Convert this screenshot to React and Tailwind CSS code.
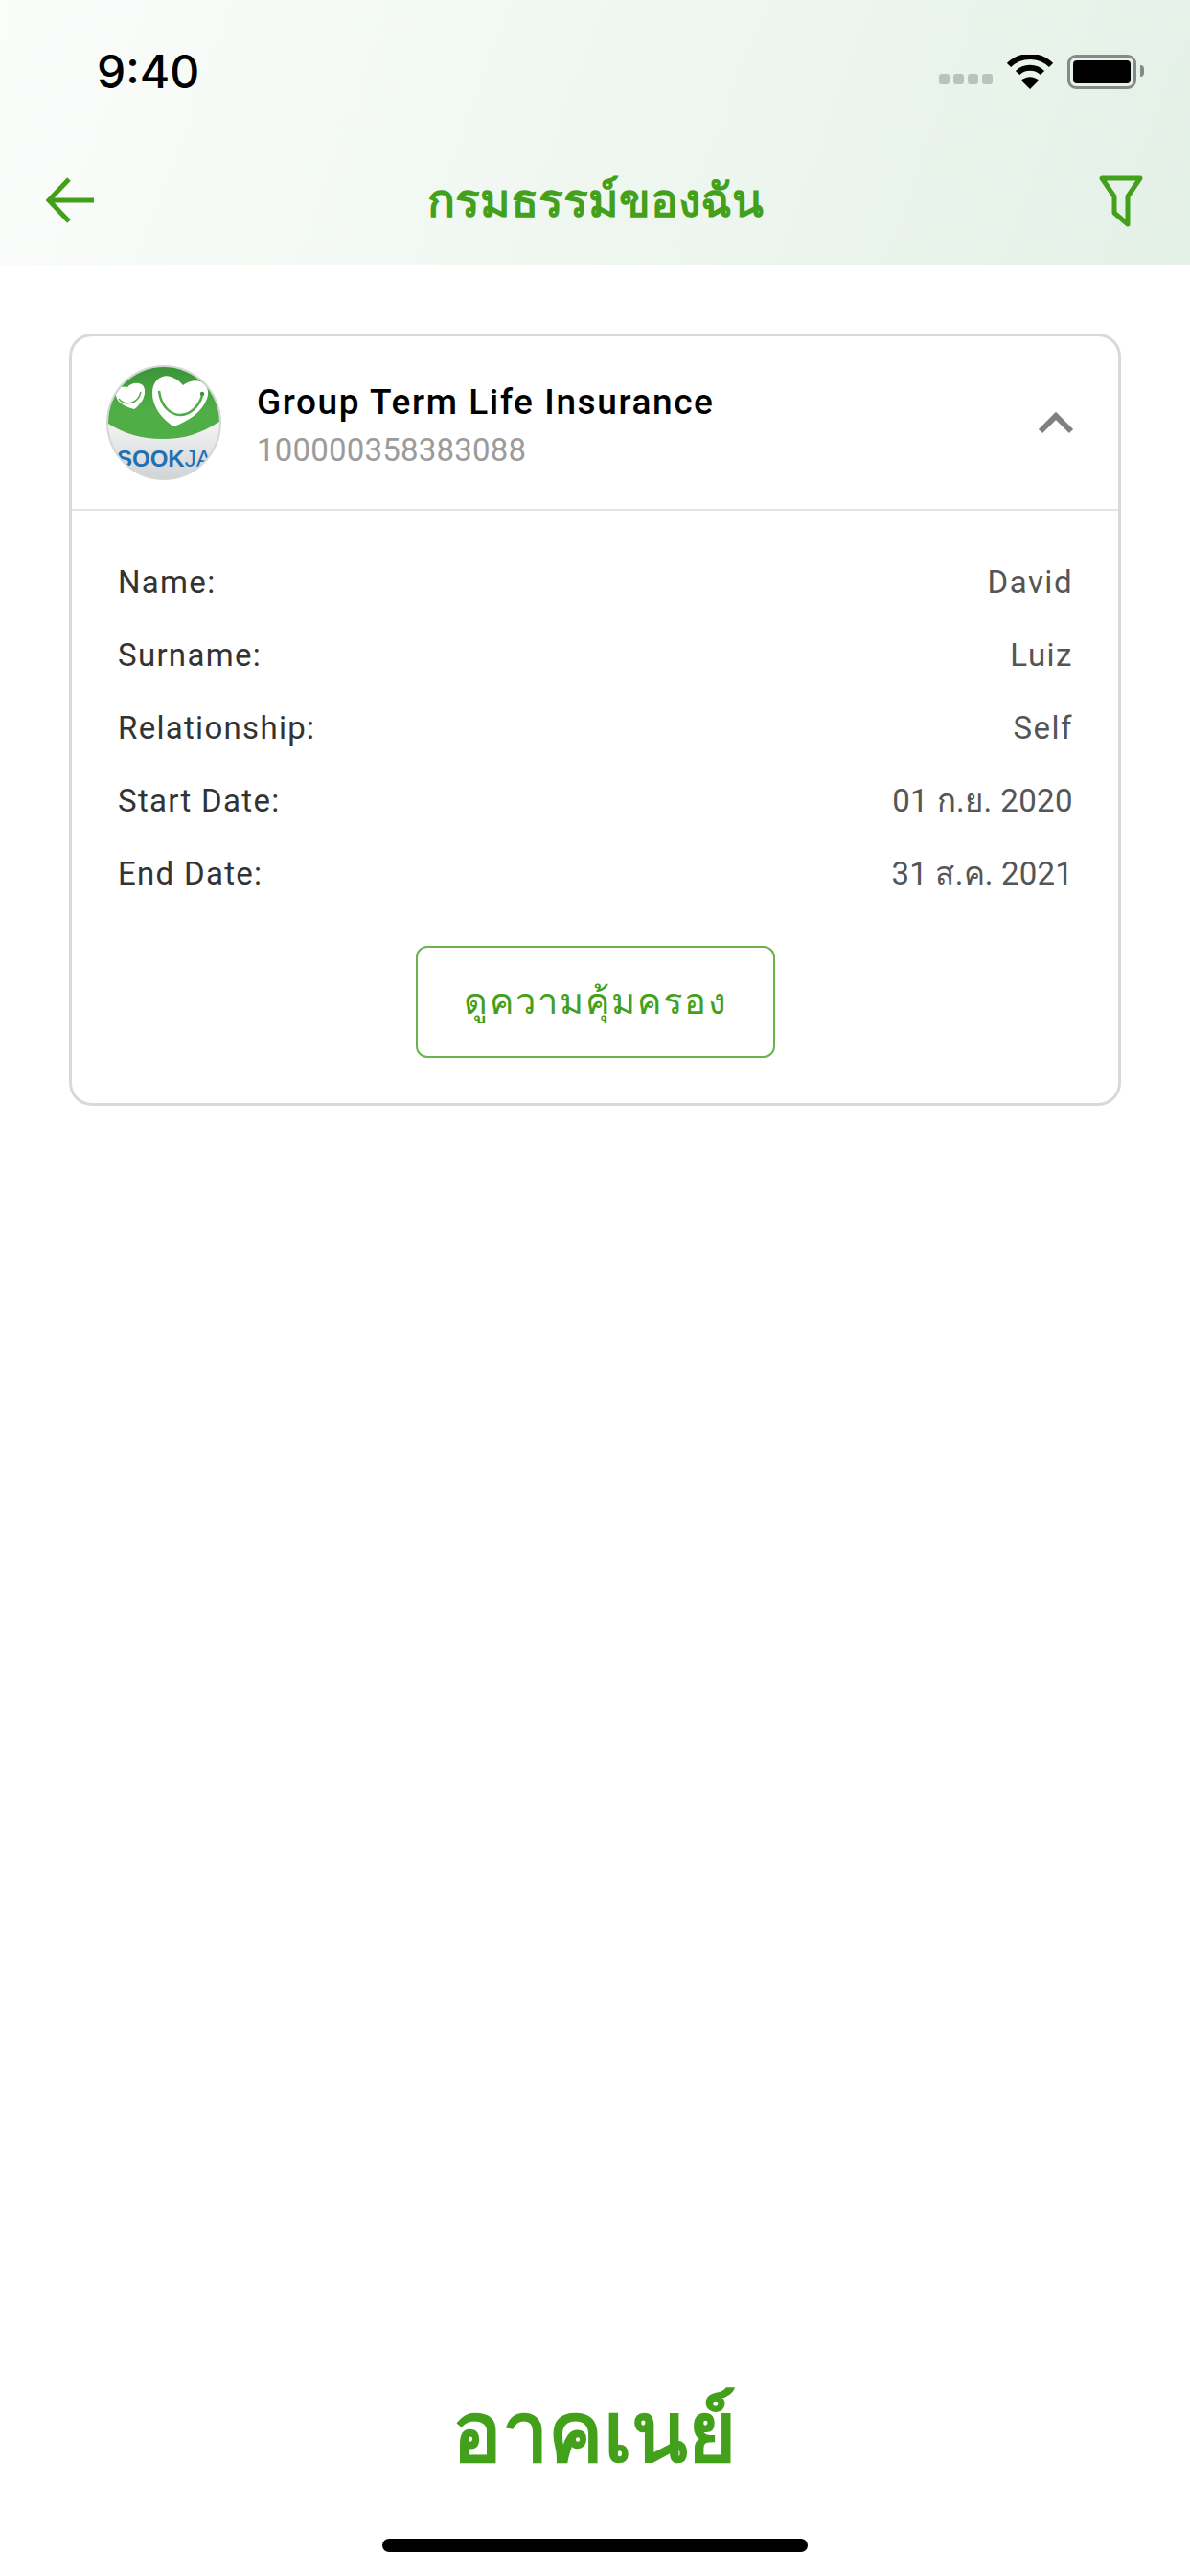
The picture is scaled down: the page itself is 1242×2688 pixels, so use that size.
import React from 'react';

const green = '#43a01b';

const rows = [
  { label: 'Name:', value: 'David', valueClass: 'tracking-[1.5px]' },
  { label: 'Surname:', value: 'Luiz', valueClass: 'tracking-[1.5px]' },
  { label: 'Relationship:', value: 'Self', valueClass: 'tracking-[1.5px]' },
  { label: 'Start Date:', value: '01 ก.ย. 2020', valueClass: 'tracking-[0.4px]' },
  { label: 'End Date:', value: '31 ส.ค. 2021', valueClass: 'tracking-[0.2px]' },
];

const StatusIcons = () => (
  <div className="flex items-center mt-[7px]">
    <div className="flex gap-[4px] mt-[14px] mr-[15px]">
      <span className="w-[11px] h-[11px] rounded-[3px] bg-[#b9c4bc]" />
      <span className="w-[11px] h-[11px] rounded-[3px] bg-[#b9c4bc]" />
      <span className="w-[11px] h-[11px] rounded-[3px] bg-[#b9c4bc]" />
      <span className="w-[11px] h-[11px] rounded-[3px] bg-[#b9c4bc]" />
    </div>
    <svg width="48" height="36" viewBox="0 0 48 36" fill="none" className="mr-[15px]">
      <path d="M2 11 C14 -1 34 -1 46 11" stroke="#000" strokeWidth="6" />
      <path d="M11 19 C18 12 30 12 37 19" stroke="#000" strokeWidth="6" />
      <path d="M15 27 C20 22 28 22 33 27 L24 36 Z" fill="#000" />
    </svg>
    <div className="relative w-[72px] h-[36px] rounded-[9px] border-[3px] border-[#858a86] p-[3px]">
      <div className="w-full h-full rounded-[4px] bg-black" />
      <span className="absolute -right-[11px] top-[8px] w-[4px] h-[12px] rounded-r-[4px] bg-[#858a86]" />
    </div>
  </div>
);

const Logo = () => (
  <svg width="122" height="122" viewBox="0 0 122 122" className="shrink-0">
    <defs>
      <clipPath id="disc"><circle cx="61" cy="61" r="58" /></clipPath>
      <linearGradient id="silver" x1="0" y1="0" x2="0" y2="1">
        <stop offset="0.5" stopColor="#f4f4f4" />
        <stop offset="1" stopColor="#cfd2d3" />
      </linearGradient>
      <linearGradient id="leaf" x1="0" y1="0" x2="0" y2="1">
        <stop offset="0" stopColor="#3a9338" />
        <stop offset="0.6" stopColor="#4fae46" />
      </linearGradient>
    </defs>
    <circle cx="61" cy="61" r="60" fill="#d5d7d7" />
    <g clipPath="url(#disc)">
      <rect width="122" height="122" fill="url(#silver)" />
      <path d="M0 0 H122 V58 C100 72 84 78 60 78 C36 78 18 72 0 60 Z" fill="url(#leaf)" />
      <path d="M49 30 C49 16 60 10 68 13 C74 15 78 18 81 22 C86 18 94 16 99 18 C106 21 109 28 106 36 C101 50 86 60 71 65 C58 56 49 44 49 30 Z" fill="#fff" />
      <path d="M56 28 C58 44 68 53 78 53 C88 53 97 45 101 33" fill="none" stroke="#4fae46" strokeWidth="2.5" />
      <circle cx="101" cy="31" r="2.2" fill="#3a9338" />
      <path d="M11 32 C11 25 17 22 23 24 C26 20 34 18 39 22 C43 27 41 36 36 41 C34 44 32 46 30 47 C22 45 11 40 11 32 Z" fill="#fff" />
      <path d="M14 36 C20 44 34 42 37 29" fill="none" stroke="#4fae46" strokeWidth="1.5" />
      <text x="12" y="107" fontFamily="'Liberation Sans', sans-serif" fontSize="24" fontWeight="700" fill="#1e6fb5">SOOK<tspan fontWeight="400">JA</tspan></text>
    </g>
  </svg>
);

export default function App() {
  return (
    <div className="w-[1242px] h-[2688px] bg-white flex flex-col font-['Roboto','Noto_Sans',sans-serif]">
      <header className="h-[276px] shrink-0 bg-linear-110 from-[#fbfdfb] to-[#e4f1e7]">
        <div className="h-[132px] pl-[101px] pr-[56px] flex items-start justify-between pt-[50px]">
          <span className="text-[48px] leading-[50px] font-medium text-black font-['Inter',sans-serif]">9:40</span>
          <StatusIcons />
        </div>
        <div className="relative h-[144px] pl-[48px] pr-[49px] flex items-start justify-between pt-[52px]">
          <svg width="50" height="50" viewBox="0 0 50 50" fill="none" stroke={green} strokeWidth="5">
            <path d="M50 25 H3" />
            <path d="M24 3 L3 25 L24 47" />
          </svg>
          <h1 className="absolute left-0 right-0 top-[46px] text-center text-[48px] leading-[64px] font-bold text-[#43a01b]">กรมธรรม์ของฉัน</h1>
          <svg width="46" height="55" viewBox="0 0 46 55" fill="none" stroke={green} strokeWidth="5" strokeLinejoin="round" className="-mt-[1px]">
            <path d="M3 3 H43 L30 22 V51 L16 39 V22 Z" />
          </svg>
        </div>
      </header>

      <main className="flex-1 px-[72px] pt-[72px]">
        <section className="h-[806px] rounded-[24px] border-[3px] border-[#d9d9d9] bg-white">
          <div className="h-[182px] border-b-2 border-[#e3e3e3] pl-[35px] pr-[46px] flex items-center">
            <Logo />
            <div className="ml-[36px] pt-[5px] flex-1">
              <p className="text-[37px] leading-[46px] tracking-[1.6px] font-medium text-black">Group Term Life Insurance</p>
              <p className="text-[33px] leading-[42px] mt-[6px] tracking-[0.2px] text-[#9b9b9b]">100000358383088</p>
            </div>
            <svg width="38" height="24" viewBox="0 0 38 24" fill="none" stroke="#808080" strokeWidth="6">
              <path d="M3 21 L19 5 L35 21" />
            </svg>
          </div>
          <div className="pl-[48px] pr-[47px] pt-[37px]">
            {rows.map((row) => (
              <div key={row.label} className="h-[76px] flex items-center justify-between text-[33px]">
                <span className="text-[#333333] tracking-[1.3px]">{row.label}</span>
                <span className={`text-[#555555] ${row.valueClass}`}>{row.value}</span>
              </div>
            ))}
            <div className="flex justify-center mt-[37px]">
              <button className="w-[375px] h-[117px] rounded-[12px] border-2 border-[#6cb24f] text-[38px] tracking-[2px] text-[#43a01b]">ดูความคุ้มครอง</button>
            </div>
          </div>
        </section>
      </main>

      <footer className="shrink-0 flex flex-col items-center">
        <span className="text-[86px] leading-[120px] font-bold text-[#43a01b] -ml-[3px]">อาคเนย์</span>
        <div className="mt-[50px] mb-[25px] w-[444px] h-[14px] rounded-full bg-black" />
      </footer>
    </div>
  );
}
